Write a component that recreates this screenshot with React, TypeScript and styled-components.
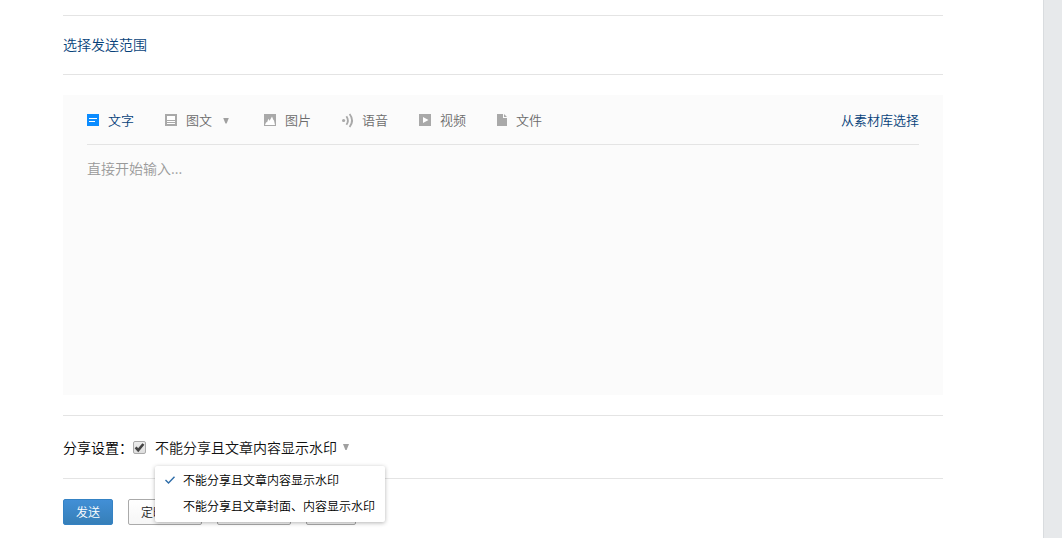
import React, { useState } from "react";
import styled, { createGlobalStyle } from "styled-components";

const GlobalStyle = createGlobalStyle`
  * { box-sizing: border-box; }
  body {
    margin: 0;
    background: #e7e9eb;
    color: #000;
    font-family: "Noto Sans CJK SC", sans-serif;
    font-size: 14px;
    font-weight: 350;
    line-height: 20px;
  }
  button, textarea, input {
    font-family: inherit;
    font-weight: inherit;
  }
`;

const Page = styled.main`
  min-height: 100vh;
  margin-right: 18px;
  padding: 15px 100px 13px 63px;
  background: #fff;
  border-right: 1px solid #d9dcdf;
`;

const Section = styled.section`
  padding: 20px 0;
  border-top: 1px solid #e4e4e4;
`;

const RangeSection = styled(Section)`
  padding: 18px 0 20px;
`;

const Link = styled.a<{ $size: number }>`
  color: #07427a;
  font-size: ${(p) => p.$size}px;
  text-decoration: none;
`;

const Editor = styled.div`
  padding: 0 24px;
  background: #fbfbfb;
`;

const Toolbar = styled.div`
  display: flex;
  align-items: center;
  justify-content: space-between;
  height: 50px;
  border-bottom: 1px solid #e4e4e4;
`;

const Tabs = styled.div`
  display: flex;
  gap: 31px;
`;

const Tab = styled.button<{ $active?: boolean }>`
  display: flex;
  align-items: center;
  gap: 9px;
  padding: 0;
  border: 0;
  background: none;
  color: ${(p) => (p.$active ? "#07427a" : "#6c6c6c")};
  font-size: 13px;
  line-height: 20px;
  svg { color: ${(p) => (p.$active ? "#0b8cff" : "#a9a9a9")}; }
`;

const Arrow = styled.span`
  width: 6px;
  height: 6px;
  background: #a0a0a0;
  clip-path: polygon(0 0, 100% 0, 60% 100%, 40% 100%);
`;

const TabArrow = styled(Arrow)`
  margin: 2px 4px 0 2px;
`;

const Message = styled.textarea`
  display: block;
  width: 100%;
  height: 250px;
  padding: 13px 0;
  border: 0;
  outline: 0;
  resize: none;
  background: transparent;
  font-size: 14px;
  line-height: 20px;
  &::placeholder { color: #999; opacity: 1; }
`;

const ShareRow = styled.div`
  display: flex;
  align-items: center;
  height: 22px;
`;

const ShareLabel = styled.label`
  width: 70px;
`;

const CheckWrap = styled.span`
  display: grid;
  margin-right: 9px;
  > * { grid-area: 1 / 1; }
  svg { pointer-events: none; }
`;

const Checkbox = styled.input`
  appearance: none;
  width: 13px;
  height: 13px;
  margin: 0;
  border: 1px solid #aaa;
  border-radius: 2px;
  background: linear-gradient(#ededed, #dedede);
  & + svg { visibility: hidden; }
  &:checked + svg { visibility: visible; }
`;

const Picker = styled.div`
  position: relative;
`;

const PickerButton = styled.button`
  display: flex;
  align-items: center;
  gap: 6px;
  padding: 0;
  border: 0;
  background: none;
  color: #111;
  font-size: 14px;
  line-height: 20px;
`;

const Menu = styled.div`
  position: absolute;
  top: 29px;
  left: 0;
  z-index: 1;
  padding: 1px 0 3px;
  border-radius: 2px;
  background: #fff;
  box-shadow: 0 1px 4px rgba(0, 0, 0, 0.3);
`;

const Option = styled.button`
  display: grid;
  grid-template-columns: 18px max-content;
  align-items: center;
  width: 100%;
  height: 26px;
  padding: 0 10px;
  border: 0;
  background: none;
  color: #000;
  font-size: 12px;
  line-height: 20px;
  text-align: left;
`;

const OptionText = styled.span`
  grid-column: 2;
`;

const Actions = styled.div`
  display: flex;
  gap: 15px;
`;

const Button = styled.button<{ $primary?: boolean }>`
  height: 26px;
  padding: 0 12px;
  border: 1px solid ${(p) => (p.$primary ? "#3482c4" : "#aaa")};
  border-radius: 2px;
  background: ${(p) =>
    p.$primary ? "linear-gradient(#428fd6, #367fb8)" : "linear-gradient(#fff, #f6f6f6)"};
  color: ${(p) => (p.$primary ? "#fff" : "#222")};
  font-size: 12px;
  line-height: 20px;
`;

const Glyph = ({ w = 12, children }: { w?: number; children: React.ReactNode }) => (
  <svg width={w} height="12" viewBox={`0 0 ${w} 12`} overflow="visible" aria-hidden="true">
    {children}
  </svg>
);

const tabs = [
  {
    name: "文字",
    icon: (
      <Glyph>
        <path fill="currentColor" d="M0 0h12v12H0z" />
        <path fill="#fff" d="M2 4h8v1H2zM2 7h6v1H2z" />
      </Glyph>
    ),
  },
  {
    name: "图文",
    arrow: true,
    icon: (
      <Glyph>
        <path fill="currentColor" d="M0 0h12v12H0z" />
        <path fill="#fff" d="M2 2h8v4H2zM2 7h8v1H2zM2 9h8v1H2z" />
      </Glyph>
    ),
  },
  {
    name: "图片",
    icon: (
      <Glyph>
        <path fill="currentColor" d="M0 0h12v12H0z" />
        <path fill="#fff" d="M1 11L2.2 8l.8.6L4.4 4.8l1.2 2L8 2.4l1.2 3 .8 1L11 11z" />
      </Glyph>
    ),
  },
  {
    name: "语音",
    icon: (
      <Glyph w={11}>
        <circle cx="1.6" cy="6.5" r="1.6" fill="currentColor" />
        <path fill="none" stroke="currentColor" strokeWidth="1.8" d="M4.4 2.2Q7.4 6.5 4.4 10.8M7.6 0Q12.6 6.5 7.6 13" />
      </Glyph>
    ),
  },
  {
    name: "视频",
    icon: (
      <Glyph>
        <path fill="currentColor" d="M0 0h12v12H0z" />
        <path fill="#fff" d="M4 3l5.5 3L4 9z" />
      </Glyph>
    ),
  },
  {
    name: "文件",
    icon: (
      <Glyph w={10}>
        <path fill="currentColor" d="M0 0h6v4h4v8H0z" />
        <path fill="currentColor" d="M7 0l3 3H7z" />
      </Glyph>
    ),
  },
];

const options = ["不能分享且文章内容显示水印", "不能分享且文章封面、内容显示水印"];

export default function App() {
  const [tab, setTab] = useState("文字");
  const [choice, setChoice] = useState(0);
  const [open, setOpen] = useState(true);

  return (
    <>
      <GlobalStyle />
      <Page>
        <RangeSection>
          <Link href="#range" $size={14}>选择发送范围</Link>
        </RangeSection>
        <Section>
          <Editor>
            <Toolbar>
              <Tabs>
                {tabs.map((t) => (
                  <Tab key={t.name} type="button" $active={t.name === tab} onClick={() => setTab(t.name)}>
                    {t.icon}
                    {t.name}
                    {t.arrow && <TabArrow />}
                  </Tab>
                ))}
              </Tabs>
              <Link href="#library" $size={13}>从素材库选择</Link>
            </Toolbar>
            <Message aria-label="文字" placeholder="直接开始输入..." />
          </Editor>
        </Section>
        <Section>
          <ShareRow>
            <ShareLabel htmlFor="share">分享设置：</ShareLabel>
            <CheckWrap>
              <Checkbox id="share" type="checkbox" defaultChecked />
              <svg width="13" height="13" viewBox="0 0 13 13" aria-hidden="true">
                <path fill="none" stroke="#444" strokeWidth="2.6" d="M2.6 6.4l2.6 2.8L10.4 3" />
              </svg>
            </CheckWrap>
            <Picker>
              <PickerButton type="button" aria-expanded={open} onClick={() => setOpen(!open)}>
                {options[choice]}
                <Arrow />
              </PickerButton>
              {open && (
                <Menu>
                  {options.map((text, i) => (
                    <Option key={text} type="button" onClick={() => setChoice(i)}>
                      {i === choice && (
                        <svg width="10" height="8" viewBox="0 0 10 8" aria-hidden="true">
                          <path fill="none" stroke="#2d6ca8" strokeWidth="1.4" d="M.5 4l3 3L9.5.8" />
                        </svg>
                      )}
                      <OptionText>{text}</OptionText>
                    </Option>
                  ))}
                </Menu>
              )}
            </Picker>
          </ShareRow>
        </Section>
        <Section>
          <Actions>
            <Button type="button" $primary>发送</Button>
            <Button type="button">定时发送</Button>
            <Button type="button">存为草稿</Button>
            <Button type="button">预览</Button>
          </Actions>
        </Section>
      </Page>
    </>
  );
}
